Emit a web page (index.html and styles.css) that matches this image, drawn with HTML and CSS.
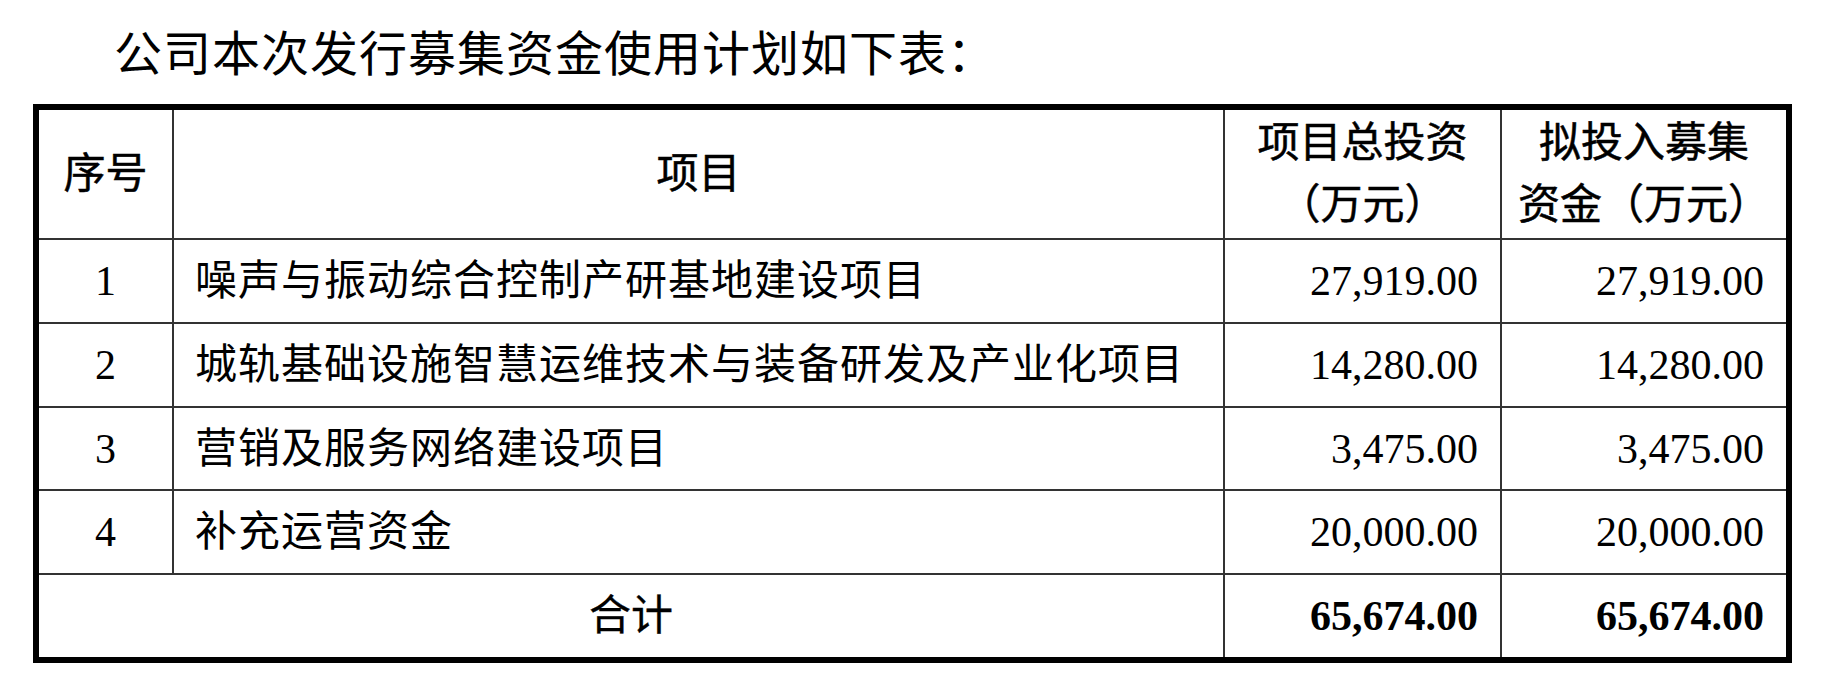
FILE: index.html
```html
<!DOCTYPE html>
<html lang="zh-CN">
<head>
<meta charset="utf-8">
<title>募集资金使用计划</title>
<link rel="stylesheet" href="styles.css">
</head>
<body>
<div class="page">
  <p class="intro">公司本次发行募集资金使用计划如下表：</p>
  <table class="plan">
    <colgroup>
      <col class="c-no">
      <col class="c-name">
      <col class="c-total">
      <col class="c-raise">
    </colgroup>
    <thead>
      <tr class="head">
        <th>序号</th>
        <th>项目</th>
        <th>项目总投资<br>（万元）</th>
        <th>拟投入募集<br>资金（万元）</th>
      </tr>
    </thead>
    <tbody>
      <tr class="r84">
        <td class="no">1</td>
        <td class="name">噪声与振动综合控制产研基地建设项目</td>
        <td class="num">27,919.00</td>
        <td class="num">27,919.00</td>
      </tr>
      <tr class="r84">
        <td class="no">2</td>
        <td class="name">城轨基础设施智慧运维技术与装备研发及产业化项目</td>
        <td class="num">14,280.00</td>
        <td class="num">14,280.00</td>
      </tr>
      <tr class="r83">
        <td class="no">3</td>
        <td class="name">营销及服务网络建设项目</td>
        <td class="num">3,475.00</td>
        <td class="num">3,475.00</td>
      </tr>
      <tr class="r84">
        <td class="no">4</td>
        <td class="name">补充运营资金</td>
        <td class="num">20,000.00</td>
        <td class="num">20,000.00</td>
      </tr>
      <tr class="total">
        <td class="sum" colspan="2">合计</td>
        <td class="num strong">65,674.00</td>
        <td class="num strong">65,674.00</td>
      </tr>
    </tbody>
  </table>
</div>
</body>
</html>
```

FILE: styles.css
```css
html, body {
  margin: 0;
  padding: 0;
  background: #ffffff;
}

body {
  font-family: "Liberation Serif", "Noto Sans CJK SC", serif;
  color: #000000;
}

.page {
  padding: 23px 0 0 33px;
}

.intro {
  margin: 0 0 17px 0;
  padding-left: 81px;
  font-size: 48px;
  line-height: 64px;
  letter-spacing: 1px;
  white-space: nowrap;
}

.plan {
  border-collapse: separate;
  border-spacing: 0;
  border: 6px solid #000000;
  table-layout: fixed;
  width: 1759px;
  font-size: 42px;
}

.c-no { width: 135px; }
.c-name { width: 1051px; }
.c-total { width: 277px; }
.c-raise { width: 284px; }

.plan th,
.plan td {
  box-sizing: border-box;
  padding: 0;
  border-right: 2px solid #333333;
  border-bottom: 2px solid #333333;
  vertical-align: middle;
  white-space: nowrap;
  line-height: 62px;
}

.plan th:last-child,
.plan td:last-child {
  border-right: none;
}

.plan tr.total td {
  border-bottom: none;
}

.plan th {
  font-weight: 400;
  -webkit-text-stroke: 0.5px #000000;
  text-align: center;
}

.head th { height: 130px; }
.r84 td { height: 84px; }
.r83 td { height: 83px; }
.total td { height: 82px; }

.no {
  text-align: center;
}

.name {
  text-align: left;
  letter-spacing: 1px;
  padding-left: 21px !important;
}

.num {
  text-align: right;
  padding-right: 22px !important;
}

.sum {
  text-align: center;
  font-weight: 400;
  -webkit-text-stroke: 0.3px #000000;
}

.strong {
  font-weight: 700;
}
```
